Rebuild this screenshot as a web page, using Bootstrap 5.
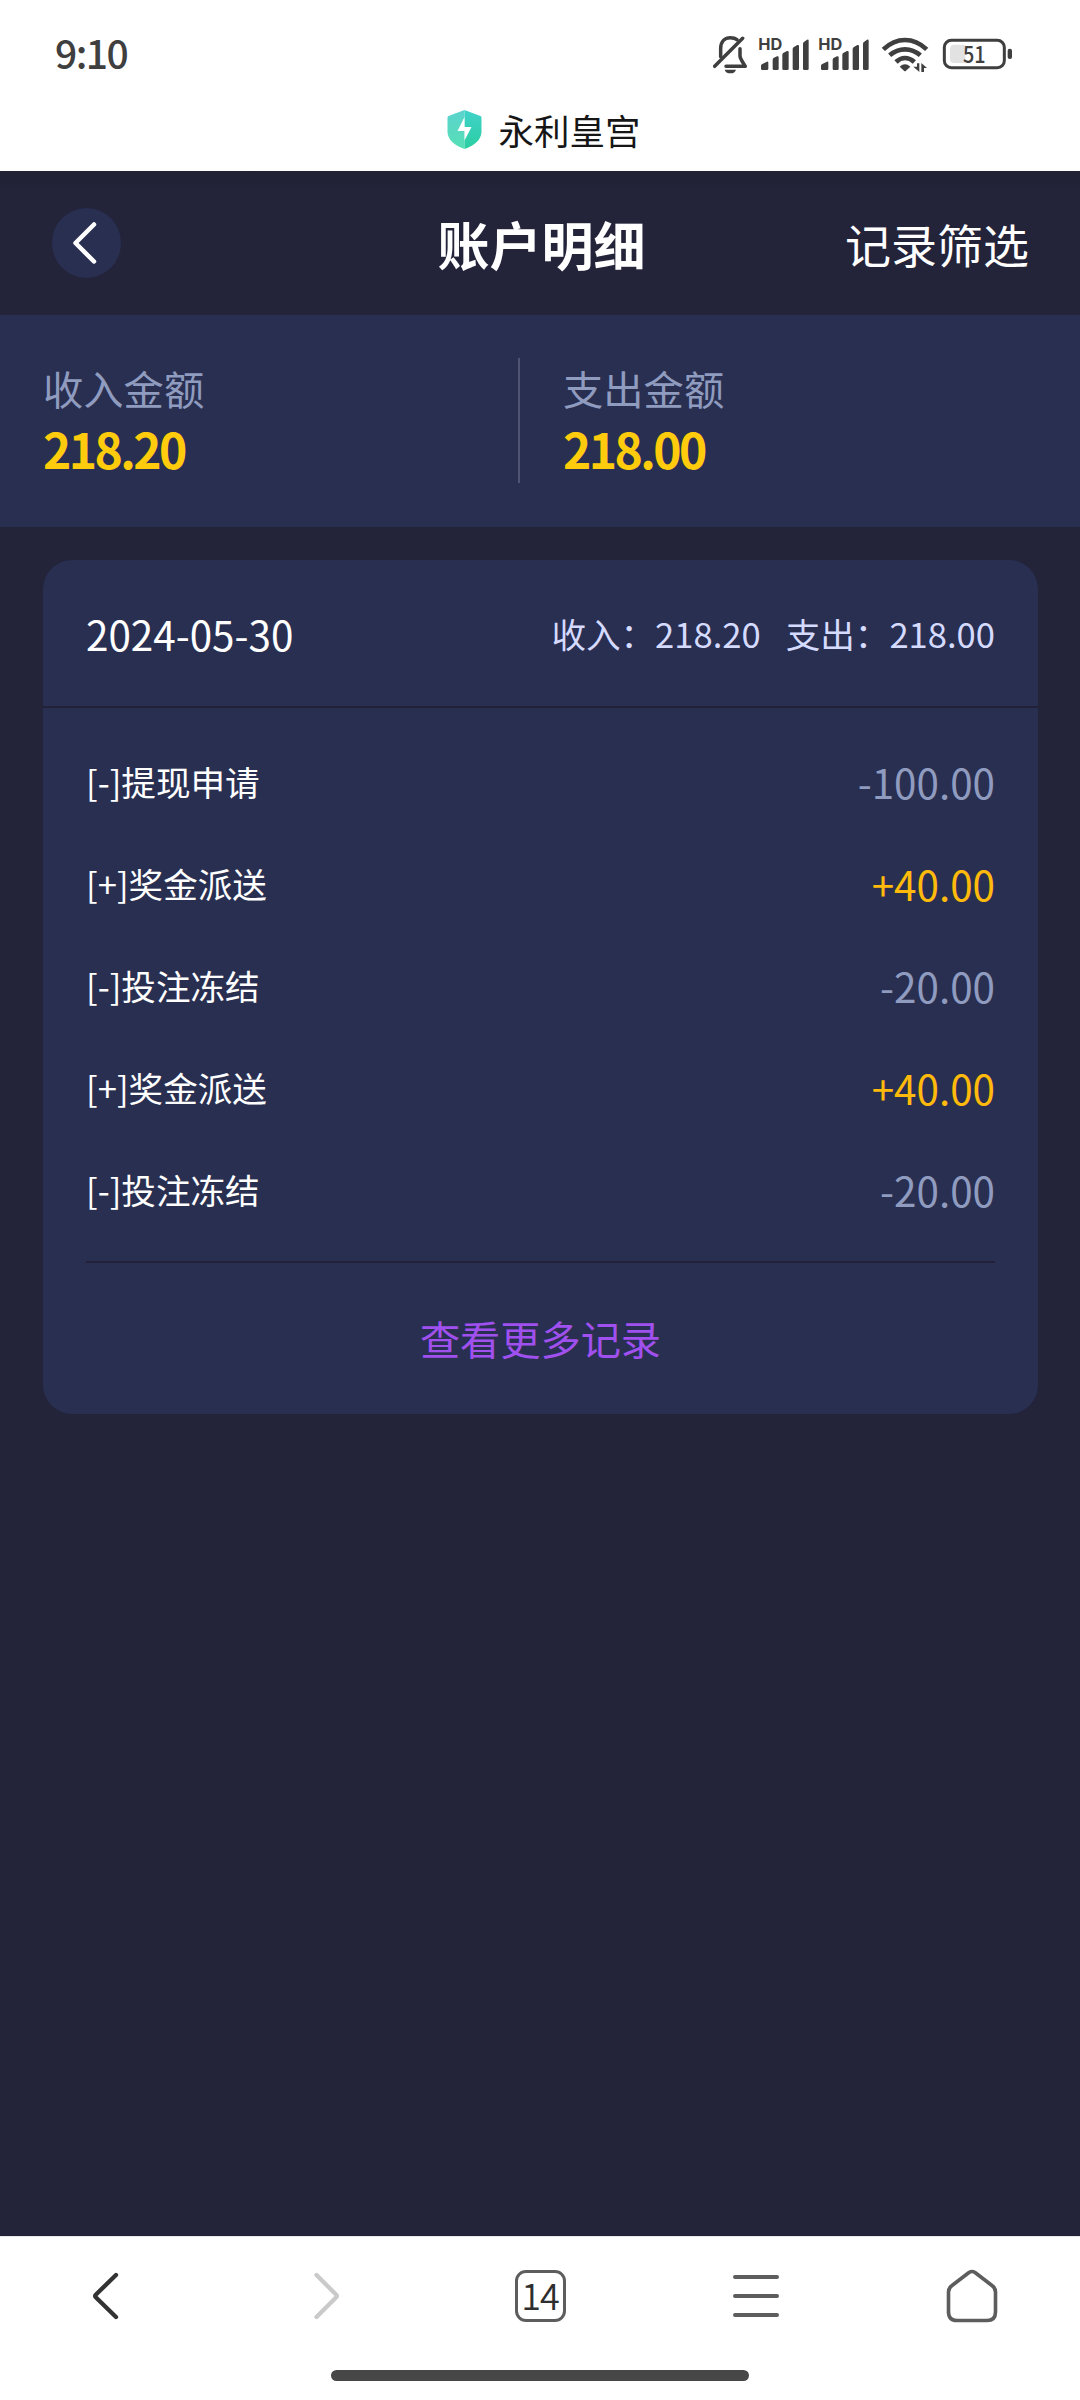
<!DOCTYPE html>
<html lang="zh-CN">
<head>
<meta charset="utf-8">
<meta name="viewport" content="width=device-width, initial-scale=1">
<title>账户明细</title>
<link href="https://cdn.jsdelivr.net/npm/bootstrap@5.3.0/dist/css/bootstrap.min.css" rel="stylesheet">
<style>
  body { background: #23233a; color: #fff; font-family: "Noto Sans CJK SC", sans-serif; width: 1080px; height: 2400px; overflow: hidden; }
  svg { display: block; flex: none; }
  .status-bar { height: 88px; padding: 19px 68px 0 55px; color: #3f3f3f; }
  .status-icons { margin-top: 14px; }
  .clock { font-weight: 500; font-size: 39px; line-height: 66px; letter-spacing: -1.5px; }
  .site-title { height: 83px; padding-left: 8px; gap: 16px; color: #161616; font-size: 35.5px; line-height: 83px; }
  .app-header { height: 144px; padding: 0 51px 0 52px; background: linear-gradient(#222235, #23233a 24px); line-height: 144px; }
  .back-btn { width: 69px; height: 70px; padding-right: 3px; background: #292f51; }
  .page-heading { padding: 1px 0 0 3px; font-size: 52px; font-weight: 700; line-height: 144px; }
  .filter-link { font-size: 46px; color: #fff; }
  .panel { background: #292f51; }
  .totals { height: 212px; padding: 43px 0 44px; }
  .total-col { padding-left: 43px; line-height: 60px; }
  .total-col:first-child { width: 520px; border-right: 2px solid #4f5475; }
  .total-label { font-size: 40.3px; color: #8f9bbf; }
  .total-value { font-size: 48px; font-weight: 700; color: #ffcc0d; letter-spacing: -2.6px; }
  .record-card { margin: 33px 42px 0 43px; height: 854px; border-radius: 29px; }
  .record-head { height: 148px; padding: 2px 43px 0; border-bottom: 2px solid #222139; }
  .record-date { font-size: 40.4px; }
  .record-sum { font-size: 34.6px; color: #d5daff; gap: 25px; }
  .record-list { margin: 0 43px; padding: 23px 0 20px; border-bottom: 2px solid #222139; }
  .record-row { height: 102px; font-size: 34.6px; }
  .amount { font-size: 40.4px; color: #8f9bbf; }
  .amount.plus { color: #ffba0c; }
  .more-link { color: #a050ee; font-size: 40.2px; }
  .browser-nav { height: 164px; border-top: 1px solid #e8e8ec; }
  .nav-icons { height: 117px; }
  .tab-count { width: 51px; height: 52px; border: 3.5px solid #5d5d5d; border-radius: 11px; color: #2e2e2e; font-size: 36px; line-height: 43px; letter-spacing: -1px; font-weight: 350; }
  .home-bar { width: 418px; height: 11px; margin-top: 16px; background: #474747; }
</style>
</head>
<body class="d-flex flex-column">
  <header class="bg-white flex-shrink-0">
    <div class="status-bar d-flex justify-content-between align-items-start">
      <span class="clock">9:10</span>
      <svg class="status-icons" width="299" height="41" viewBox="69 39 897 123" fill="#3f3f3f">
        <!-- muted bell -->
        <g fill="none" stroke="#3f3f3f" stroke-width="10.500" stroke-linecap="round" stroke-linejoin="round">
          <path d="M92 110V86C92 62 106 53 121 53C129 53 135 54 141 59M150 86V108C151 118 158 126 166 139H108"/>
          <path d="M74 139L158 55"/>
        </g>
        <path d="M104 149H138Q135 160 121 160T104 149Z"/>
        <defs>
          <g id="signal">
            <text x="205" y="90" font-family="Inter" font-weight="700" font-size="49" textLength="72" lengthAdjust="spacingAndGlyphs">HD</text>
            <path d="M217 132L231 125Q235 124 235 128V146Q235 150 231 150H217Q213 150 213 146V137Q213 134 217 132ZM248 119Q248 115 252 113L261 109Q266 108 266 112V146Q266 150 262 150H252Q248 150 248 146ZM277 104Q277 100 281 98L291 93Q296 92 296 96V146Q296 150 292 150H281Q277 150 277 146ZM308 87Q308 83 312 81L322 75Q327 74 327 78V146Q327 150 323 150H312Q308 150 308 146ZM339 71Q339 67 343 65L351 59Q356 57 356 62V146Q356 150 352 150H343Q339 150 339 146Z"/>
          </g>
        </defs>
        <use href="#signal"/>
        <use href="#signal" x="180"/>
        <!-- wifi -->
        <g fill="none" stroke="#3f3f3f" stroke-width="14">
          <path d="M580 88Q610 60 645 60T710 88"/>
          <path d="M599 106Q620 88 645 88T691 106"/>
          <path d="M618 126Q630 114 645 114T673 126"/>
        </g>
        <path d="M629 140Q645 126 661 140L648 152Q645 155 642 152Z"/>
        <path d="M681 130H688V156L670 140H681ZM694 156V129L711 144H702V156Z"/>
        <!-- battery -->
        <rect x="763" y="61" width="180" height="82" rx="21" fill="none" stroke="#3f3f3f" stroke-width="9"/>
        <path d="M793 74H826V129H793Q780 129 780 116V87Q780 74 793 74Z" fill="#e2e2e2"/>
        <rect x="953" y="86" width="13" height="31" rx="6"/>
        <text x="819" y="129" font-family="Noto Sans CJK SC" font-weight="500" font-size="68" textLength="68" lengthAdjust="spacingAndGlyphs">51</text>
      </svg>
    </div>
    <div class="site-title d-flex justify-content-center align-items-center">
      <svg width="35" height="39" viewBox="0 0 35 39">
        <defs>
          <linearGradient id="shieldL" x1="0" y1="0" x2="0" y2="1"><stop offset="0" stop-color="#5bd3ce"/><stop offset="1" stop-color="#57dfb5"/></linearGradient>
          <linearGradient id="shieldR" x1="0" y1="0" x2="0" y2="1"><stop offset="0" stop-color="#40d2ca"/><stop offset="1" stop-color="#2bcea2"/></linearGradient>
        </defs>
        <path d="M17.500 0L1.500 6Q.5 6.500 .5 8V22Q1 33 17.500 39Z" fill="url(#shieldL)"/>
        <path d="M17.500 0L33.500 6Q34.500 6.500 34.500 8V22Q34 33 17.500 39Z" fill="url(#shieldR)"/>
        <path d="M17.500 7L10.500 21H17.500V30.500L24.500 17H17.500Z" fill="#fff"/>
      </svg>
      <span>永利皇宫</span>
    </div>
  </header>

  <main class="flex-grow-1">
    <div class="app-header d-flex align-items-center justify-content-between position-relative">
      <a href="#" class="back-btn rounded-circle d-flex align-items-center justify-content-center" aria-label="返回">
        <svg width="26" height="44" viewBox="0 0 26 44" fill="none" stroke="#fff" stroke-width="4.500" stroke-linecap="round" stroke-linejoin="round"><path d="M22 3.500L3.500 22L22 40.500"/></svg>
      </a>
      <h1 class="page-heading position-absolute top-0 start-50 translate-middle-x m-0 text-nowrap">账户明细</h1>
      <a href="#" class="filter-link text-decoration-none">记录筛选</a>
    </div>

    <section class="totals panel d-flex">
      <div class="total-col">
        <div class="total-label">收入金额</div>
        <div class="total-value">218.20</div>
      </div>
      <div class="total-col">
        <div class="total-label">支出金额</div>
        <div class="total-value">218.00</div>
      </div>
    </section>

    <section class="record-card panel d-flex flex-column">
      <div class="record-head d-flex align-items-center justify-content-between">
        <span class="record-date">2024-05-30</span>
        <div class="record-sum d-flex"><span>收入：218.20</span><span>支出：218.00</span></div>
      </div>
      <div class="record-list">
        <div class="record-row d-flex align-items-center justify-content-between"><span>[-]提现申请</span><span class="amount">-100.00</span></div>
        <div class="record-row d-flex align-items-center justify-content-between"><span>[+]奖金派送</span><span class="amount plus">+40.00</span></div>
        <div class="record-row d-flex align-items-center justify-content-between"><span>[-]投注冻结</span><span class="amount">-20.00</span></div>
        <div class="record-row d-flex align-items-center justify-content-between"><span>[+]奖金派送</span><span class="amount plus">+40.00</span></div>
        <div class="record-row d-flex align-items-center justify-content-between"><span>[-]投注冻结</span><span class="amount">-20.00</span></div>
      </div>
      <a href="#" class="more-link text-decoration-none flex-grow-1 d-flex align-items-center justify-content-center">查看更多记录</a>
    </section>
  </main>

  <footer class="browser-nav bg-white flex-shrink-0">
    <div class="nav-icons row g-0 align-items-center">
      <div class="col d-flex justify-content-center">
        <svg width="30" height="50" viewBox="0 0 30 50" fill="none" stroke="#333" stroke-width="4.300" stroke-linecap="round" stroke-linejoin="round"><path d="M23 4L3 23.500Q1.500 25 3 26.500L23 46"/></svg>
      </div>
      <div class="col d-flex justify-content-center">
        <svg width="30" height="50" viewBox="0 0 30 50" fill="none" stroke="#cacaca" stroke-width="4.300" stroke-linecap="round" stroke-linejoin="round"><path d="M7.500 4L27 23.500Q28.500 25 27 26.500L7.500 46"/></svg>
      </div>
      <div class="col d-flex justify-content-center"><div class="tab-count text-center">14</div></div>
      <div class="col d-flex justify-content-center">
        <svg width="46" height="44" viewBox="0 0 46 44" stroke="#5d5d5d" stroke-width="4" stroke-linecap="round"><path d="M2 3H44M2 22H44M2 41H44"/></svg>
      </div>
      <div class="col d-flex justify-content-center">
        <svg width="52" height="54" viewBox="0 0 52 54" fill="none" stroke="#5d5d5d" stroke-width="3.600" stroke-linejoin="round"><path d="M23 3.500Q26 1.500 29 3.500L46 16.500Q49.500 19 49.500 23V43Q49.500 51.500 41 51.500H11Q2.500 51.500 2.500 43V23Q2.500 19 6 16.500Z"/></svg>
      </div>
    </div>
    <div class="home-bar rounded-pill mx-auto"></div>
  </footer>
<script src="https://cdn.jsdelivr.net/npm/bootstrap@5.3.0/dist/js/bootstrap.bundle.min.js"></script>
</body>
</html>
